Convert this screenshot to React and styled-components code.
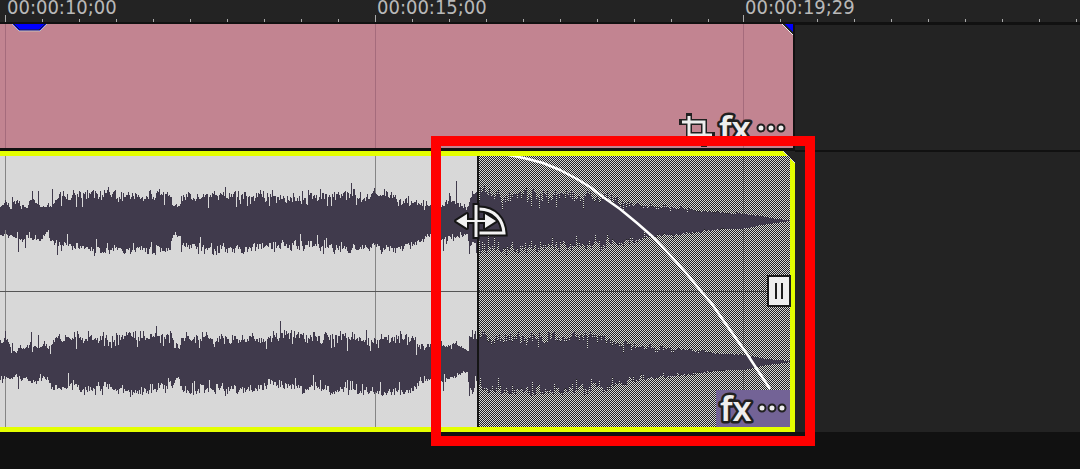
import React from "react";
import styled, { createGlobalStyle } from "styled-components";

const GlobalStyle = createGlobalStyle`
  * { box-sizing: border-box; }
  body { margin: 0; background: #111; font-family: "DejaVu Sans Condensed", "DejaVu Sans", sans-serif; }
  button { font: inherit; padding: 0; border: 0; background: none; cursor: pointer; }
  svg { display: block; overflow: visible; }
`;

const Timeline = styled.main`
  min-height: 100vh;
  overflow: hidden;
  background: #111;
`;

const Ruler = styled.header`
  display: grid;
  grid-template-columns: 5px 370fr 368fr 337fr;
  height: 24px;
  border-bottom: 2px solid #111;
  background: #232323;
`;

const RulerSection = styled.div`
  border-left: 1px solid transparent;
  background:
    linear-gradient(#aaa, #aaa) 0 100% / 1px 7px no-repeat border-box,
    repeating-linear-gradient(90deg, #aaa 0 1px, transparent 1px 37px) 0 100% / 100% 3px no-repeat border-box;
`;

const Timecode = styled.time`
  display: block;
  padding-left: 1px;
  font-size: 20px;
  line-height: 14px;
  color: #b9b9b9;
  white-space: nowrap;
`;

const Lane = styled.section`
  display: grid;
  grid-template-columns: 53fr 19fr;
  background: #232323;
  box-shadow: inset 0 1px #111;
`;

const VideoLane = styled(Lane)`
  border-bottom: 1px solid #111;
`;

const VideoClip = styled.div`
  position: relative;
  display: grid;
  grid-template-columns: 5fr 370fr 368fr 50fr;
  height: 126px;
  border: solid #111;
  border-width: 0 2px 2px 0;
  background: #c28491;
`;

const GridCell = styled.div`
  border-left: ${(p) => (p.$line ? "1px solid #a56b7c" : "0")};
`;

const ClipMarker = styled.svg`
  position: absolute;
  top: 0;
  ${(p) => (p.$end ? "right: 0;" : "left: 12px;")}
`;

const Badges = styled.div`
  position: absolute;
  right: ${(p) => (p.$boxed ? "0" : "4px")};
  bottom: 0;
  display: flex;
  align-items: flex-start;
  height: ${(p) => (p.$boxed ? "37px" : "38px")};
  background: ${(p) => (p.$boxed ? "#736396" : "transparent")};
`;

const BadgeButton = styled.button`
  width: ${(p) => p.$width}px;
  height: 37px;
`;

const AudioClip = styled.div`
  position: relative;
  display: flex;
  border: solid #e4ff00;
  border-width: 5px 5px 5px 0;
  background: #d8d8d8;
`;

const WaveBody = styled.svg`
  flex: 1 1 0;
  min-width: 0;
  height: 271px;
`;

const FadeRegion = styled.svg`
  flex: none;
  width: 313px;
  height: 271px;
  overflow: hidden;
`;

const Corner = styled.svg`
  position: absolute;
  top: -5px;
  right: -5px;
`;

const FadeHandle = styled.button`
  position: absolute;
  right: -1px;
  top: 119px;
  display: flex;
  justify-content: center;
  align-items: center;
  gap: 4px;
  width: 24px;
  height: 32px;
  border: 2px solid #1c1c1c;
  background: #eee;
`;

const HandleBar = styled.span`
  width: 2px;
  height: 16px;
  background: #1c1c1c;
`;

const Highlight = styled.div`
  position: absolute;
  z-index: 2;
  top: -20px;
  right: -25px;
  bottom: -19px;
  width: 384px;
  border: 10px solid #f00;
  pointer-events: none;
`;

const CursorSvg = styled.svg`
  position: absolute;
  left: 12px;
  top: 54px;
`;

/* Envelope points: [time column, level] */
const TOP_LEFT = [[0,207],[5,203],[10,208],[13,201],[20,205],[26,208],[32,200],[38,207],[45,207],[50,205],[57,200],[65,197],[75,196],[90,195],[110,196],[120,198],[130,197],[145,199],[155,196],[170,196],[172,206],[179,207],[182,195],[195,200],[225,199],[240,197],[265,198],[285,199],[315,197],[350,196],[365,199],[375,196],[390,198],[400,201],[415,204],[430,207],[440,208],[450,203],[458,206],[467,207],[470,198],[478,193],[500,198],[520,196],[560,198],[590,198],[620,204],[650,207],[687,209],[700,211],[720,213],[743,214],[760,216],[775,219],[791,220]];
const BOTTOM_LEFT = [[0,235],[15,235],[20,238],[30,235],[40,240],[47,232],[51,241],[57,245],[65,244],[76,246],[95,248],[115,247],[135,246],[160,249],[171,248],[173,236],[180,233],[182,246],[200,246],[225,247],[255,246],[285,243],[315,246],[345,247],[375,247],[395,246],[410,243],[425,238],[430,235],[445,239],[467,234],[470,244],[478,247],[530,247],[560,245],[590,245],[620,241],[650,236],[687,233],[700,232],[720,229],[743,229],[760,225],[775,223],[791,221]];
const TOP_RIGHT = [[0,343],[5,341],[10,348],[15,353],[20,347],[24,351],[31,343],[37,350],[45,345],[50,349],[53,341],[65,341],[77,338],[100,341],[118,337],[145,339],[165,340],[172,338],[179,349],[182,340],[200,340],[225,341],[260,340],[285,338],[315,340],[340,338],[365,342],[375,340],[400,337],[412,339],[420,346],[435,345],[450,346],[460,347],[468,352],[470,338],[500,341],[560,339],[590,340],[620,345],[650,348],[687,350],[720,354],[743,355],[760,358],[775,360],[791,361]];
const BOTTOM_RIGHT = [[0,378],[12,379],[16,372],[18,380],[25,378],[30,382],[47,378],[52,385],[60,387],[75,382],[85,388],[110,386],[130,388],[150,388],[170,384],[178,376],[182,388],[200,387],[235,388],[255,388],[263,382],[290,386],[315,386],[340,390],[375,391],[400,390],[415,387],[420,380],[445,378],[467,372],[469,388],[478,386],[530,389],[560,387],[590,387],[620,382],[650,377],[687,374],[720,370],[743,370],[760,366],[775,364],[791,362]];

/* Loud and quiet moments of each channel: column -> [extra above, extra below] */
const SPIKES_LEFT = { 12: [5, 0], 18: [0, 14], 25: [0, 13], 32: [5, 0], 38: [14, 0], 52: [12, 0], 57: [0, 9], 91: [5, 0], 108: [5, 0], 155: [0, 4], 181: [0, 6], 225: [5, 0], 261: [0, 5], 351: [9, 0], 384: [0, 5], 391: [6, 0], 443: [0, 10], 449: [8, 0], 456: [23, 0], 469: [4, 8] };
const SPIKES_RIGHT = { 5: [9, 0], 12: [6, 0], 18: [0, 8], 31: [11, 0], 38: [12, 0], 51: [0, 6], 77: [9, 0], 130: [0, 5], 143: [5, 0], 156: [8, 3], 186: [7, 3], 280: [12, 0], 306: [8, 0], 345: [5, 0], 366: [9, 4], 443: [0, 9], 456: [5, 0], 469: [6, 9] };

function level(points, x) {
  const i = points.findIndex((p) => p[0] > x);
  if (i < 1) return points[points.length - 1][1];
  const [x0, y0] = points[i - 1];
  const [x1, y1] = points[i];
  return y0 + ((y1 - y0) * (x - x0)) / (x1 - x0);
}

function jitter(n) {
  let v = Math.imul(n + 71, 2654435761) >>> 0;
  v = Math.imul(v ^ (v >>> 15), 2246822519) >>> 0;
  v = Math.imul(v ^ (v >>> 13), 3266489917) >>> 0;
  return ((v ^ (v >>> 16)) >>> 0) / 4294967296;
}

function waveform(top, bottom, spikes, from, to, seed) {
  let d = "";
  for (let x = from; x < to; x++) {
    const t = level(top, x);
    const b = level(bottom, x);
    const scale = Math.min(1, ((b - t) / 44) ** 2);
    const edge = (k) => {
      const r = jitter(x * 3 + seed + k * 5000);
      const kick = r > 0.88 ? 5 : r < 0.07 ? -8 : 0;
      const drift = jitter((x >> 2) * 5 + seed + k * 3100) - 0.4;
      return ((jitter(x * 7 + seed + k * 900) - 0.4) * 7 + drift * 6 + kick) * scale;
    };
    const s = spikes[x] || [0, 0];
    const y0 = Math.round(t - Math.min(edge(1), 8) - s[0]) - 156;
    const y1 = Math.round(b + Math.min(edge(2), 8) + s[1]) - 156;
    d += `M${x - from} ${y0}h1V${y1}h-1z`;
  }
  return d;
}

const FADE_START = 477;
const CLIP_END = 790;

function channels(from, to) {
  return [
    { id: "left", d: waveform(TOP_LEFT, BOTTOM_LEFT, SPIKES_LEFT, from, to, 11) },
    { id: "right", d: waveform(TOP_RIGHT, BOTTOM_RIGHT, SPIKES_RIGHT, from, to, 407) },
  ];
}

const BODY_WAVES = channels(0, FADE_START);
const FADE_WAVES = channels(FADE_START, CLIP_END);

function CropIcon() {
  const d = "M7 2V21H30M0 8H22V30";
  return (
    <svg width="36" height="38" viewBox="0 0 36 38" fill="none" aria-label="Crop">
      <path d={d} stroke="#202020" strokeWidth="6" strokeLinecap="square" transform="translate(3 4)" />
      <path d={d} stroke="#eee" strokeWidth="3" transform="translate(3 4)" />
    </svg>
  );
}

function FxBadge() {
  return (
    <BadgeButton $width={40} aria-label="Effects">
      <svg width="40" height="37" viewBox="0 0 40 37">
        <text x="4" y="31" fontFamily="Noto Sans, sans-serif" fontWeight="600" fontSize="34" fill="#eee" stroke="#202020" strokeWidth="5" strokeLinejoin="round" paintOrder="stroke">fx</text>
      </svg>
    </BadgeButton>
  );
}

function MoreBadge() {
  return (
    <BadgeButton $width={34} aria-label="More">
      <svg width="34" height="37" viewBox="0 0 34 37" fill="#eee" stroke="#202020" strokeWidth="2">
        <circle cx="6" cy="18" r="3.5" />
        <circle cx="16" cy="18" r="3.5" />
        <circle cx="26" cy="18" r="3.5" />
      </svg>
    </BadgeButton>
  );
}

function TrimCursor() {
  return (
    <CursorSvg width="58" height="44" viewBox="0 0 58 44" fill="none">
      <path d="M26 9C42 9 50 20 51 33H26" stroke="#151515" strokeWidth="7" />
      <path d="M26 9C42 9 50 20 51 33H26" stroke="#f2f2f2" strokeWidth="3" />
      <path d="M3 21L14 14V20H32V14L43 21L32 28V22H14V28Z" fill="#f2f2f2" stroke="#151515" strokeWidth="4" strokeLinejoin="round" paintOrder="stroke" />
      <path d="M23 3V39" stroke="#151515" strokeWidth="7" />
      <path d="M23 5V37" stroke="#f2f2f2" strokeWidth="3" />
      <path d="M14 21H32" stroke="#f2f2f2" strokeWidth="2" />
    </CursorSvg>
  );
}

export default function App() {
  return (
    <>
      <GlobalStyle />
      <Timeline>
        <Ruler>
          <span />
          {["00:00:10;00", "00:00:15;00", "00:00:19;29"].map((t) => (
            <RulerSection key={t}>
              <Timecode>{t}</Timecode>
            </RulerSection>
          ))}
        </Ruler>
        <VideoLane aria-label="Video track">
          <VideoClip>
            <GridCell />
            <GridCell $line />
            <GridCell $line />
            <GridCell $line />
            <ClipMarker width="36" height="8" viewBox="0 0 36 8">
              <path d="M0 0L7 7H28L35 0Z" fill="#00f" />
              <path d="M2 0L8 6H27L33 0" fill="none" stroke="#202020" />
              <path d="M0 0L7 7H28L35 0" fill="none" stroke="#c9c0b8" />
            </ClipMarker>
            <ClipMarker $end width="11" height="12" viewBox="0 0 11 12">
              <path d="M0 0H11V11Z" fill="#222" />
              <path d="M3 0H11V8Z" fill="#00f" />
              <path d="M0 0L11 11" stroke="#eee" />
            </ClipMarker>
            <Badges>
              <CropIcon />
              <FxBadge />
              <MoreBadge />
            </Badges>
          </VideoClip>
        </VideoLane>
        <Lane aria-label="Audio track">
          <AudioClip>
            <WaveBody viewBox="0 0 477 271" preserveAspectRatio="none" shapeRendering="crispEdges">
              <path d="M5 0h1v271h-1zM375 0h1v271h-1z" fill="#858585" />
              <path d="M0 135h477v1H0z" fill="#555" />
              {BODY_WAVES.map((w) => <path key={w.id} d={w.d} fill="#403a4c" />)}
            </WaveBody>
            <FadeRegion viewBox="0 0 313 271">
              <defs>
                <pattern id="mesh" width="2" height="2" patternUnits="userSpaceOnUse">
                  <path d="M0 0h1v1h-1zM1 1h1v1h-1z" fill="#222" />
                </pattern>
              </defs>
              <g shapeRendering="crispEdges">
                <path d="M266 0h1v271h-1z" fill="#858585" />
                <path d="M0 135h313v1H0z" fill="#555" />
                <path d="M0 0h313v271H0z" fill="url(#mesh)" />
                {FADE_WAVES.map((w) => <path key={w.id} d={w.d} fill="#403a4c" />)}
                <path d="M0 0h2v271H0z" fill="#151515" />
              </g>
              <path d="M31 -1L37 0L51 3L66 7L83 14L100 23L113 31L126 41L143 53L160 67L176 81L193 99L210 118L223 134L235 148L246 164L270 198L293 233" fill="none" stroke="#fff" strokeWidth="2.5" strokeLinejoin="round" />
            </FadeRegion>
            <Corner width="12" height="12" viewBox="0 0 12 12">
              <path d="M0 0H12V12Z" fill="#232323" />
              <path d="M0 0L12 12" stroke="#ddd" />
            </Corner>
            <Badges $boxed>
              <FxBadge />
              <MoreBadge />
            </Badges>
            <FadeHandle aria-label="Fade out handle">
              <HandleBar />
              <HandleBar />
            </FadeHandle>
            <Highlight>
              <TrimCursor />
            </Highlight>
          </AudioClip>
        </Lane>
      </Timeline>
    </>
  );
}
